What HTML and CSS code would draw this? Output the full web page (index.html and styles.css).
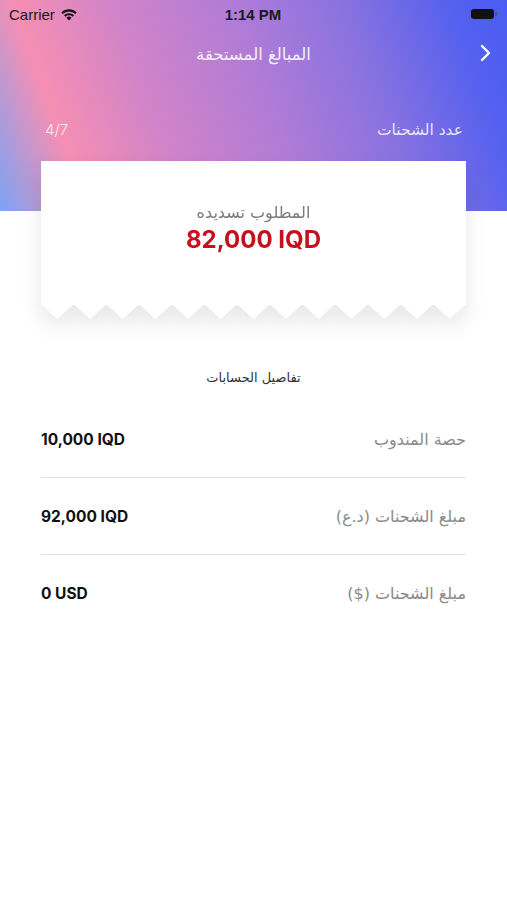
FILE: index.html
```html
<!DOCTYPE html>
<html lang="ar">
<head>
    <meta charset="UTF-8">
    <meta name="viewport" content="width=device-width, initial-scale=1.0">
    <title>المبالغ المستحقة</title>
    <link rel="stylesheet" href="styles.css">
</head>
<body>
    <header class="hero">
        <div class="status-bar">
            <div class="carrier">
                Carrier
                <svg class="wifi" width="18" height="13" viewBox="0 0 18 13">
                    <path d="M9 12.6 L6.4 9.8 A3.8 3.8 0 0 1 11.6 9.8 Z" fill="#111"/>
                    <path d="M3.9 7.2 A7.4 7.4 0 0 1 14.1 7.2 L12.6 8.8 A5.2 5.2 0 0 0 5.4 8.8 Z" fill="#111"/>
                    <path d="M1.3 4.5 A11 11 0 0 1 16.7 4.5 L15.2 6.1 A8.8 8.8 0 0 0 2.8 6.1 Z" fill="#111"/>
                </svg>
            </div>
            <div class="clock">1:14 PM</div>
            <div class="battery">
                <span class="battery-body"></span>
                <span class="battery-nub"></span>
            </div>
        </div>

        <div class="nav-bar">
            <h1 class="nav-title">المبالغ المستحقة</h1>
            <svg class="nav-back" width="12" height="18" viewBox="0 0 12 18">
                <path d="M3 2 L10 9 L3 16" fill="none" stroke="#fff" stroke-width="2.4" stroke-linecap="round" stroke-linejoin="round"/>
            </svg>
        </div>

        <div class="count-row">
            <span class="count-value">4/7</span>
            <span class="count-label" dir="rtl">عدد الشحنات</span>
        </div>
    </header>

    <div class="card-wrap">
        <div class="card">
            <p class="card-label" dir="rtl">المطلوب تسديده</p>
            <p class="card-amount">82,000 IQD</p>
        </div>
        <svg class="zigzag" viewBox="0 0 26 2" preserveAspectRatio="none">
            <polygon fill="#fff" points="0,0 1,2 2,0 3,2 4,0 5,2 6,0 7,2 8,0 9,2 10,0 11,2 12,0 13,2 14,0 15,2 16,0 17,2 18,0 19,2 20,0 21,2 22,0 23,2 24,0 25,2 26,0"/>
        </svg>
    </div>

    <h2 class="section-title" dir="rtl">تفاصيل الحسابات</h2>

    <ul class="details">
        <li class="detail-row">
            <span class="detail-value">10,000 IQD</span>
            <span class="detail-label" dir="rtl">حصة المندوب</span>
        </li>
        <li class="detail-row">
            <span class="detail-value">92,000 IQD</span>
            <span class="detail-label" dir="rtl">مبلغ الشحنات (د.ع)</span>
        </li>
        <li class="detail-row">
            <span class="detail-value">0 USD</span>
            <span class="detail-label" dir="rtl">مبلغ الشحنات ($)</span>
        </li>
    </ul>
</body>
</html>
```

FILE: styles.css
```css
body {
    margin: 0;
    padding: 0;
    background: #fff;
    font-family: "DejaVu Sans", "Noto Sans", sans-serif;
    color: #111;
}
.hero {
    height: 211px;
    background: linear-gradient(70deg, #7ba3f5 0%, #f68fb3 15%, #d184c8 32%, #b27cd6 52%, #8872e0 72%, #5561ef 90%, #4a5cf2 100%);
    display: flex;
    flex-direction: column;
}
.status-bar {
    height: 28px;
    display: flex;
    align-items: center;
    justify-content: space-between;
    padding: 0 10px 0 9px;
    font-family: "Liberation Sans", Arial, sans-serif;
    font-size: 15px;
    color: #1a1a1a;
}
.carrier {
    display: flex;
    align-items: center;
    gap: 5px;
    width: 90px;
}
.clock {
    font-weight: bold;
}
.battery {
    width: 90px;
    display: flex;
    justify-content: flex-end;
    align-items: center;
}
.battery-body {
    width: 23px;
    height: 10px;
    background: #111;
    border-radius: 3px;
}
.battery-nub {
    width: 2px;
    height: 4px;
    margin-left: 1px;
    background: #555;
    border-radius: 0 1px 1px 0;
}
.nav-bar {
    height: 52px;
    display: flex;
    align-items: center;
    justify-content: center;
    position: relative;
}
.nav-title {
    margin: 0;
    font-size: 16.5px;
    font-weight: normal;
    color: #f4f0fb;
}
.nav-back {
    position: absolute;
    right: 16px;
    top: 16px;
}
.count-row {
    display: flex;
    justify-content: space-between;
    align-items: center;
    padding: 0 44px 0 45px;
    margin-top: 40px;
    font-size: 15.5px;
    color: rgba(255, 255, 255, 0.85);
}
.count-value {
    font-family: "Inter", sans-serif;
    font-weight: 300;
    font-size: 15px;
}
.card-wrap {
    margin: -50px 41px 0;
    filter: drop-shadow(0 10px 10px rgba(0, 0, 0, 0.09));
}
.card {
    background: #fff;
    height: 144px;
    padding-top: 41px;
    box-sizing: border-box;
    text-align: center;
}
.card-label {
    margin: 0;
    font-size: 16px;
    color: #7a7a7a;
    line-height: 22px;
}
.card-amount {
    margin: 1px 0 0;
    font-family: "Inter", sans-serif;
    font-weight: 700;
    font-size: 24px;
    line-height: 30px;
    color: #c4111d;
}
.zigzag {
    display: block;
    width: 100%;
    height: 15px;
    margin-top: -1px;
}
.section-title {
    margin: 49px 0 0;
    text-align: center;
    font-size: 13px;
    font-weight: normal;
    color: #333;
    line-height: 20px;
}
.details {
    list-style: none;
    margin: 13px 41px 0;
    padding: 0;
}
.detail-row {
    height: 76px;
    display: flex;
    justify-content: space-between;
    align-items: center;
    border-bottom: 1px solid #e2e2e2;
}
.detail-row:last-child {
    border-bottom: none;
}
.detail-value {
    font-family: "Inter", sans-serif;
    font-weight: 700;
    font-size: 15.5px;
    color: #111;
}
.detail-label {
    font-size: 16px;
    color: #8a8a8a;
}
```
